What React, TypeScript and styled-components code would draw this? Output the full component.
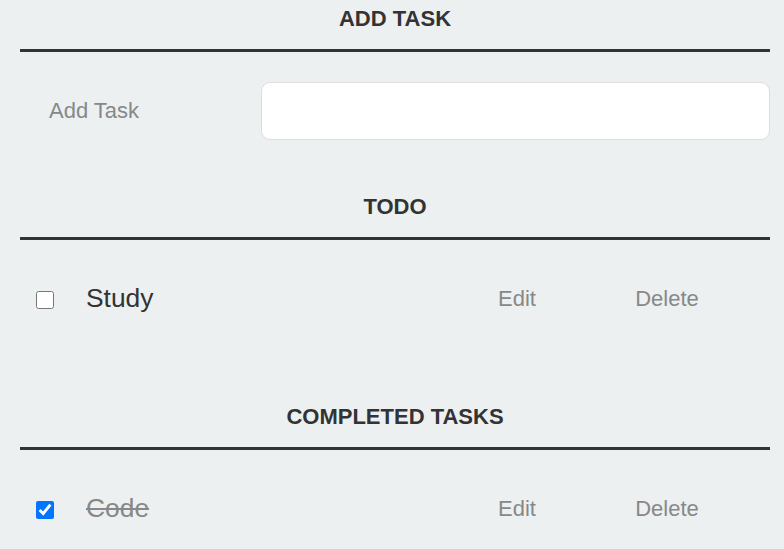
import React from "react";
import styled, { createGlobalStyle } from "styled-components";

const GlobalStyle = createGlobalStyle`
  html, body {
    margin: 0;
    padding: 0;
    background: #ecf0f1;
  }
  body {
    font-family: "Liberation Sans", Arial, sans-serif;
    color: #333;
  }
`;

const Page = styled.div`
  padding: 6px 14px 0 20px;
  width: 750px;
`;

const Heading = styled.h3<{ $gap: number }>`
  margin: ${(p) => p.$gap}px 0 0;
  padding: 0 0 17px;
  border-bottom: 3px solid #333;
  font-size: 22px;
  line-height: 26px;
  font-weight: 700;
  text-align: center;
  text-transform: uppercase;
  color: #333;
`;

const NewTaskRow = styled.div`
  display: flex;
  align-items: center;
  margin-top: 30px;
  height: 58px;
`;

const NewTaskLabel = styled.label`
  box-sizing: border-box;
  width: 241px;
  padding-left: 29px;
  font-size: 22px;
  color: #888;
`;

const TextInput = styled.input`
  box-sizing: border-box;
  flex: 1;
  height: 58px;
  margin: 0;
  padding: 0 14px;
  border: 1px solid #ddd;
  border-radius: 9px;
  background: #fff;
  font-family: "Liberation Sans", Arial, sans-serif;
  font-size: 22px;
  color: #888;
  outline: none;
`;

const TaskList = styled.ul`
  margin: 0;
  padding: 0;
  list-style: none;
`;

const TaskItem = styled.li`
  display: flex;
  align-items: center;
  padding: 29px 28px 29px 16px;
`;

const Check = styled.input`
  width: 18px;
  height: 18px;
  margin: 3px 0 0;
  flex: none;
`;

const TaskLabel = styled.label<{ $done?: boolean }>`
  flex: 1;
  padding-left: 32px;
  font-size: 26.4px;
  line-height: 59px;
  color: ${(p) => (p.$done ? "#888" : "#333")};
  text-decoration: ${(p) => (p.$done ? "line-through" : "none")};
`;

const ActionButton = styled.button`
  width: 150px;
  margin: 0;
  padding: 0;
  border: 0;
  background: none;
  font-family: "Liberation Sans", Arial, sans-serif;
  font-size: 22px;
  color: #888;
  text-align: center;
  cursor: pointer;
`;

type Task = { name: string; done: boolean };

const TaskRow = ({ task }: { task: Task }) => (
  <TaskItem>
    <Check type="checkbox" defaultChecked={task.done} />
    <TaskLabel $done={task.done}>{task.name}</TaskLabel>
    <ActionButton>Edit</ActionButton>
    <ActionButton>Delete</ActionButton>
  </TaskItem>
);

export default function App() {
  return (
    <>
      <GlobalStyle />
      <Page>
        <Heading $gap={0}>Add Task</Heading>
        <NewTaskRow>
          <NewTaskLabel htmlFor="new-task">Add Task</NewTaskLabel>
          <TextInput id="new-task" type="text" />
        </NewTaskRow>
        <Heading $gap={54}>Todo</Heading>
        <TaskList>
          <TaskRow task={{ name: "Study", done: false }} />
        </TaskList>
        <Heading $gap={47}>Completed Tasks</Heading>
        <TaskList>
          <TaskRow task={{ name: "Code", done: true }} />
        </TaskList>
      </Page>
    </>
  );
}
